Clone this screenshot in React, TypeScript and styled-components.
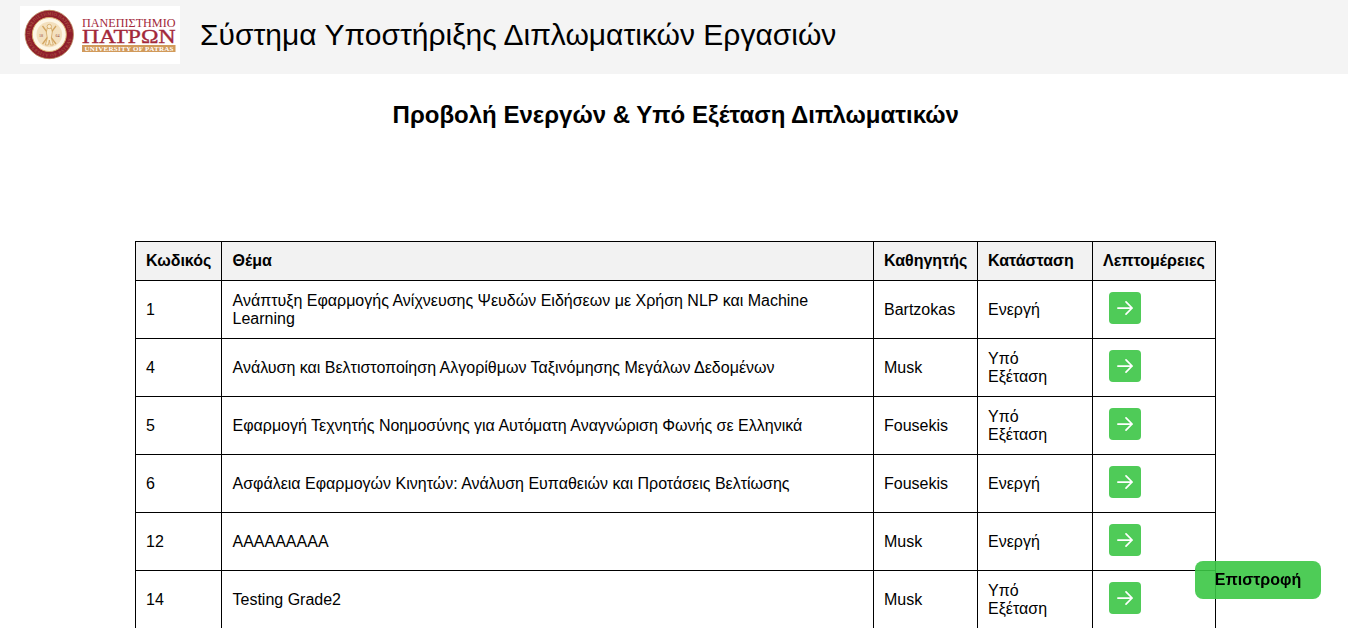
import React from 'react';
import styled, { createGlobalStyle } from 'styled-components';

const GlobalStyle = createGlobalStyle`
  html, body { margin: 0; height: 100%; overflow: hidden; background: #fff; }
  body { font-family: "Liberation Sans", Arial, sans-serif; font-size: 16px; color: #000; }
`;

const Header = styled.header`
  display: flex;
  align-items: center;
  gap: 20px;
  box-sizing: border-box;
  height: 74px;
  padding: 0 20px 4px;
  background: #f4f4f4;
`;

const Logo = styled.svg`
  display: block;
  width: 160px;
  height: 58px;
  background: #fff;
`;

const SiteName = styled.div`
  font-size: 30px;
  line-height: 36px;
  white-space: nowrap;
`;

const Title = styled.h2`
  margin: 27px 0 0;
  padding-left: 3.5px;
  font-size: 24px;
  line-height: 28px;
  text-align: center;
`;

const Table = styled.table`
  width: 1081px;
  margin: 112px 0 0 135px;
  border-collapse: collapse;
  table-layout: fixed;
`;

const Row = styled.tr`
  height: 58px;
`;

const HeadRow = styled.tr`
  height: 39px;
  background: #f2f2f2;
`;

const Cell = styled.td`
  padding: 0 10px;
  border: 1px solid #000;
  line-height: 18px;
  text-align: left;
  vertical-align: middle;

  &:nth-child(2) {
    padding-left: 10.5px;
  }
`;

const HeadCell = styled(Cell).attrs({ as: 'th' })`
  white-space: nowrap;
`;

const Status = styled.div`
  width: 70px;
`;

const DetailsButton = styled.button`
  display: flex;
  align-items: center;
  justify-content: center;
  width: 32px;
  height: 32px;
  margin: 0 0 3px 6px;
  padding: 0;
  border: 0;
  border-radius: 4px;
  background: #4fcb58;
  color: #fff;
`;

const BackButton = styled.button`
  position: fixed;
  right: 27px;
  bottom: 29px;
  width: 126px;
  height: 38px;
  padding: 0;
  border: 0;
  border-radius: 8px;
  background: rgba(59, 198, 69, 0.9);
  font: bold 16px/18px "Liberation Sans", Arial, sans-serif;
  color: #000;
`;

const theses = [
  { id: 1, topic: 'Ανάπτυξη Εφαρμογής Ανίχνευσης Ψευδών Ειδήσεων με Χρήση NLP και Machine Learning', professor: 'Bartzokas', status: 'Ενεργή' },
  { id: 4, topic: 'Ανάλυση και Βελτιστοποίηση Αλγορίθμων Ταξινόμησης Μεγάλων Δεδομένων', professor: 'Musk', status: 'Υπό Εξέταση' },
  { id: 5, topic: 'Εφαρμογή Τεχνητής Νοημοσύνης για Αυτόματη Αναγνώριση Φωνής σε Ελληνικά', professor: 'Fousekis', status: 'Υπό Εξέταση' },
  { id: 6, topic: 'Ασφάλεια Εφαρμογών Κινητών: Ανάλυση Ευπαθειών και Προτάσεις Βελτίωσης', professor: 'Fousekis', status: 'Ενεργή' },
  { id: 12, topic: 'ΑΑΑΑΑΑΑΑΑ', professor: 'Musk', status: 'Ενεργή' },
  { id: 14, topic: 'Testing Grade2', professor: 'Musk', status: 'Υπό Εξέταση' },
];

const columns = [
  { label: 'Κωδικός', width: 86 },
  { label: 'Θέμα', width: 652 },
  { label: 'Καθηγητής', width: 104 },
  { label: 'Κατάσταση', width: 115 },
  { label: 'Λεπτομέρειες', width: 123 },
];

const ArrowIcon = () => (
  <svg width="20" height="20" viewBox="0 0 20 20" fill="none" stroke="currentColor" strokeWidth="1.75" strokeLinecap="round" strokeLinejoin="round">
    <path d="M2.9 10h14.2M11 3.9l6.1 6.1-6.1 6.1" />
  </svg>
);

const UniversityLogo = () => (
  <Logo viewBox="0 0 160 58" fontFamily="'Liberation Serif', serif">
    <defs>
      <path id="ringTop" d="M10 28.5a19.3 19.3 0 0 1 38.6 0" />
      <path id="ringBottom" d="M6.8 28.5a22.5 22.5 0 0 0 45 0" />
    </defs>
    <circle cx="29.3" cy="28.5" r="24.2" fill="#8f1e2b" stroke="#b98a5c" strokeWidth="0.8" />
    <circle cx="29.3" cy="28.5" r="17" fill="#fdf6e6" stroke="#d9ae6c" strokeWidth="1" />
    <circle cx="29.3" cy="28.5" r="12.8" fill="#f3e0be" />
    <g fontSize="4.6" fill="#b3664a">
      <text><textPath href="#ringTop" textLength="58">ΠΑΝΕΠΙΣΤΗΜΙΟ ΠΑΤΡΩΝ</textPath></text>
      <text><textPath href="#ringBottom" textLength="66">UNIVERSITY OF PATRAS</textPath></text>
    </g>
    <path d="M22.5 20 36 38M36 20 22.5 38" stroke="#d3a660" strokeWidth="1.3" />
    <path d="M27.3 22h4l1 4-1 6 2 7h-3l-1-5-1 5h-3l2-7-1-6z" fill="#f8eacb" stroke="#cf9f58" strokeWidth="0.7" />
    <circle cx="29.3" cy="20.5" r="2.2" fill="#f8eacb" stroke="#cf9f58" strokeWidth="0.7" />
    <g fontSize="4.2" fill="#94493a">
      <text x="19" y="30.5">18</text>
      <text x="35.5" y="30.5">64</text>
    </g>
    <text x="62" y="21" fontSize="13.4" fill="#a3283a" textLength="93.5" lengthAdjust="spacingAndGlyphs">ΠΑΝΕΠΙΣΤΗΜΙΟ</text>
    <text x="62" y="36.8" fontSize="19.4" fill="#a3283a" stroke="#a3283a" strokeWidth="0.35" textLength="93.5" lengthAdjust="spacingAndGlyphs">ΠΑΤΡΩΝ</text>
    <rect x="62" y="39" width="93.5" height="7" fill="#d19a5b" />
    <text x="64.5" y="45" fontSize="7" fontWeight="bold" fill="#fff" textLength="89" lengthAdjust="spacing">UNIVERSITY OF PATRAS</text>
  </Logo>
);

export default function App() {
  return (
    <>
      <GlobalStyle />
      <Header>
        <UniversityLogo />
        <SiteName>Σύστημα Υποστήριξης Διπλωματικών Εργασιών</SiteName>
      </Header>
      <main>
        <Title>Προβολή Ενεργών &amp; Υπό Εξέταση Διπλωματικών</Title>
        <Table>
          <colgroup>
            {columns.map((c) => <col key={c.label} width={c.width} />)}
          </colgroup>
          <thead>
            <HeadRow>
              {columns.map((c) => <HeadCell key={c.label}>{c.label}</HeadCell>)}
            </HeadRow>
          </thead>
          <tbody>
            {theses.map((t) => (
              <Row key={t.id}>
                <Cell>{t.id}</Cell>
                <Cell>{t.topic}</Cell>
                <Cell>{t.professor}</Cell>
                <Cell><Status>{t.status}</Status></Cell>
                <Cell>
                  <DetailsButton aria-label="Λεπτομέρειες"><ArrowIcon /></DetailsButton>
                </Cell>
              </Row>
            ))}
          </tbody>
        </Table>
      </main>
      <BackButton>Επιστροφή</BackButton>
    </>
  );
}
